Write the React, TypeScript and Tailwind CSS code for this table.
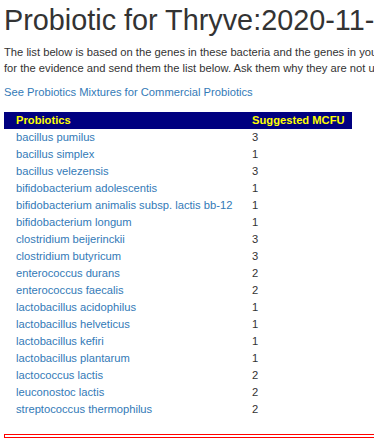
import React from "react";

const rows: [string, string][] = [
  ["bacillus pumilus", "3"],
  ["bacillus simplex", "1"],
  ["bacillus velezensis", "3"],
  ["bifidobacterium adolescentis", "1"],
  ["bifidobacterium animalis subsp. lactis bb-12", "1"],
  ["bifidobacterium longum", "1"],
  ["clostridium beijerinckii", "3"],
  ["clostridium butyricum", "3"],
  ["enterococcus durans", "2"],
  ["enterococcus faecalis", "2"],
  ["lactobacillus acidophilus", "1"],
  ["lactobacillus helveticus", "1"],
  ["lactobacillus kefiri", "1"],
  ["lactobacillus plantarum", "1"],
  ["lactococcus lactis", "2"],
  ["leuconostoc lactis", "2"],
  ["streptococcus thermophilus", "2"],
];

export default function App() {
  return (
    <div
      className="w-[374px] h-[445px] overflow-hidden bg-white text-[#333333]"
      style={{ fontFamily: '"Liberation Sans", Arial, sans-serif' }}
    >
      <div className="w-[900px] pl-[4px]">
        <h1 className="pt-[4px] text-[28.8px] leading-[32px] font-normal whitespace-nowrap">
          Probiotic for Thryve:2020-11-05
        </h1>
        <p className="mt-[8px] text-[11.2px] leading-[16px]">
          <span className="block whitespace-nowrap">
            The list below is based on the genes in these bacteria and the genes in your microbiome. Ask your probiotic provider
          </span>
          <span className="block whitespace-nowrap">
            for the evidence and send them the list below. Ask them why they are not using these probiotics.
          </span>
        </p>
        <p className="mt-[8px] text-[11.2px] leading-[16px]">
          <a className="text-[#337ab7]" href="#">
            See Probiotics Mixtures for Commercial Probiotics
          </a>
        </p>
        <div className="mt-[12px] w-[348px] text-[11.2px]">
          <div className="grid grid-cols-[236px_1fr] h-[17px] items-center bg-[#000080] text-[#ffff00] font-bold">
            <div className="pl-[12px]">Probiotics</div>
            <div className="pl-[12px]">Suggested MCFU</div>
          </div>
          {rows.map(([name, n]) => (
            <div key={name} className="grid grid-cols-[236px_1fr] h-[17px] items-center">
              <div className="pl-[12px] text-[#337ab7] whitespace-nowrap">{name}</div>
              <div className="pl-[12px] text-[#333333]">{n}</div>
            </div>
          ))}
        </div>
        <div className="mt-[16px] h-[4px] w-[700px] border border-[#ff0000]" />
      </div>
    </div>
  );
}
